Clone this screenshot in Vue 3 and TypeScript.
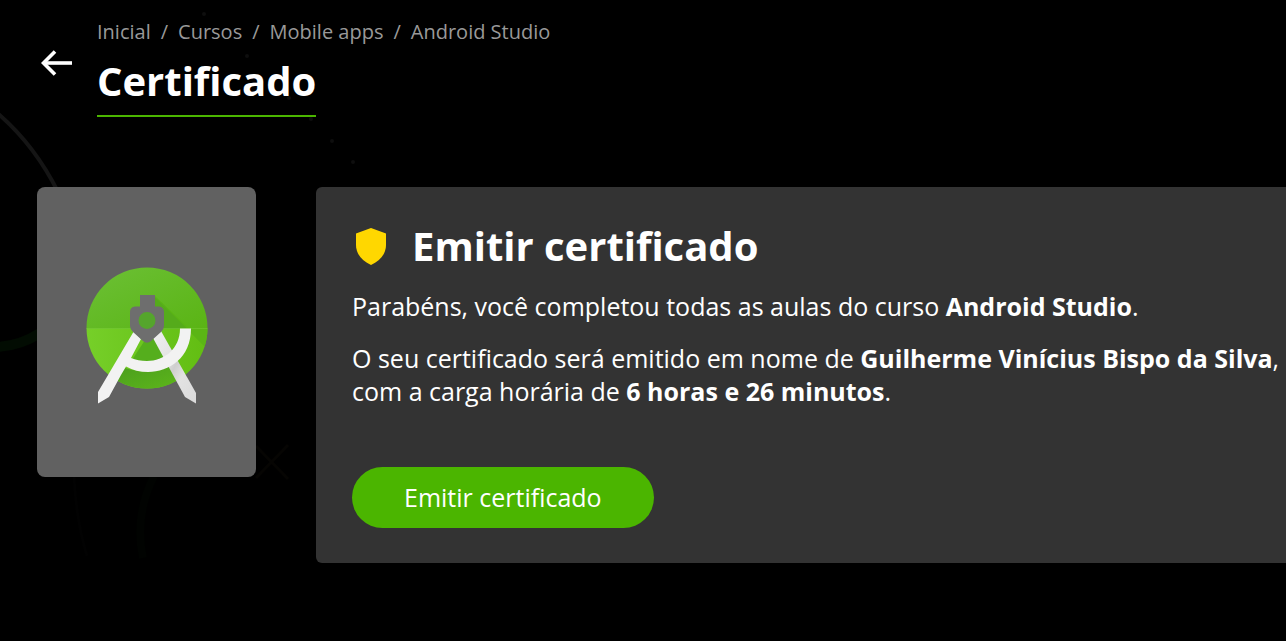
<script setup lang="ts">
interface Crumb {
  label: string
  href: string
}

const crumbs: Crumb[] = [
  { label: 'Inicial', href: '#inicial' },
  { label: 'Cursos', href: '#cursos' },
  { label: 'Mobile apps', href: '#mobile-apps' },
  { label: 'Android Studio', href: '#android-studio' },
]
const course = 'Android Studio'
const student = 'Guilherme Vinícius Bispo da Silva'
const workload = '6 horas e 26 minutos'
</script>

<template>
  <div class="page">
    <svg class="backdrop" width="380" height="580" viewBox="0 0 380 580" fill="none" aria-hidden="true">
      <path d="M-4 112Q34 144 58 192" stroke="#151515" stroke-width="4" />
      <path d="M-4 347Q20 346 40 333" stroke="#020c02" stroke-width="10" />
      <path d="M74 476Q76 520 87 556" stroke="#020202" stroke-width="3" />
      <path d="M154 476Q134 516 143 558" stroke="#010301" stroke-width="8" />
      <path d="M256 446L288 479M288 445L256 478" stroke="#060503" stroke-width="3" />
      <g fill="#0e0e0e">
        <circle cx="204" cy="14" r="2" />
        <circle cx="247" cy="56" r="2" />
        <circle cx="289" cy="98" r="2" />
        <circle cx="311" cy="119" r="2" />
        <circle cx="332" cy="141" r="2" />
        <circle cx="353" cy="162" r="2" />
      </g>
    </svg>

    <header class="header">
      <a class="back" href="#android-studio" aria-label="Voltar">
        <svg width="32" height="28" viewBox="0 0 32 28" fill="none" stroke="#fff">
          <path d="M2.500 14H31" stroke-width="3.600" />
          <path d="M14 2.500L2.500 14L14 25.500" stroke-width="3.600" />
        </svg>
      </a>
      <div class="heading">
        <nav aria-label="Navegação">
          <ol class="crumbs">
            <li v-for="crumb in crumbs" :key="crumb.label">
              <a :href="crumb.href">{{ crumb.label }}</a>
            </li>
          </ol>
        </nav>
        <h1>Certificado</h1>
      </div>
    </header>

    <main class="content">
      <div class="cover">
        <svg width="122" height="138" viewBox="0 0 122 138" role="img" aria-label="Android Studio">
          <defs>
            <linearGradient id="top" x1="0" y1="0" x2="1" y2="1">
              <stop offset="0" stop-color="#6cc036" />
              <stop offset="1" stop-color="#5ab414" />
            </linearGradient>
            <linearGradient id="bottom" x1="0" y1="0" x2="1" y2="0">
              <stop offset="0" stop-color="#76cf29" />
              <stop offset="1" stop-color="#62bd12" />
            </linearGradient>
            <linearGradient id="shade" x1="0" y1="0" x2="1" y2="1">
              <stop offset="0" stop-color="#4a9c1e" />
              <stop offset="1" stop-color="#5fb91a" />
            </linearGradient>
            <linearGradient id="leg" x1="0" y1="0" x2="1" y2="1">
              <stop offset="0" stop-color="#f0f0f0" />
              <stop offset=".35" stop-color="#e4e4e4" />
              <stop offset=".5" stop-color="#cfcfcf" />
              <stop offset=".65" stop-color="#e2e2e2" />
              <stop offset="1" stop-color="#dadada" />
            </linearGradient>
            <clipPath id="disc"><circle cx="61" cy="61" r="60.500" /></clipPath>
          </defs>
          <g clip-path="url(#disc)">
            <rect width="122" height="62" fill="url(#top)" />
            <rect y="61.500" width="122" height="62" fill="url(#bottom)" />
            <path d="M68 29L122 83V61.500L103 61.500L69 29Z" fill="#5bb515" />
            <path d="M68 29L101 61.500H70Z" fill="#55ab1b" />
            <path d="M61 70L46 93Q70 102 88 86L72 62Z" fill="#55ae1d" />
            <path d="M39 101Q65 109 84 98L97 118Q65 132 27 117Z" fill="url(#shade)" />
            <path d="M0 61.500H122" stroke="#7dcc42" stroke-width=".7" opacity=".6" />
            <circle cx="61" cy="53.500" r="10" fill="#55a52c" />
          </g>
          <path d="M67 71L75 64L110 126V136.500L99 130Z" fill="url(#leg)" />
          <path d="M94 61.500H105C105 91 83 105 62 105Q50 105 40 99.500L35 108L23 130L12 136.500V125L48 64L55 72L45 91Q52 94 61 94C78 94 94 82 94 61.500Z" fill="#f2f2f2" />
          <path fill="#6e6e6e" fill-rule="evenodd" d="M54 28H69V39.500H73Q78 40 78 45V59Q78 62 75 65L65 74Q61 77.500 57 74L47 65Q44 62 44 59V45Q44 40 49 39.500H54ZM61 45A8.500 8.500 0 1 0 61 62A8.500 8.500 0 1 0 61 45Z" />
        </svg>
      </div>

      <section class="panel" aria-labelledby="panel-title">
        <div class="panel-heading">
          <svg width="38" height="38" viewBox="0 0 38 38" aria-hidden="true">
            <path d="M19 1L34 6.500V18C34 27 28 34 19 38C10 34 4 27 4 18V6.500Z" fill="gold" />
          </svg>
          <h2 id="panel-title">Emitir certificado</h2>
        </div>
        <p>Parabéns, você completou todas as aulas do curso <strong>{{ course }}</strong>.</p>
        <p>
          O seu certificado será emitido em nome de <strong>{{ student }}</strong>,
          com a carga horária de <strong>{{ workload }}</strong>.
        </p>
        <button type="button">Emitir certificado</button>
      </section>
    </main>
  </div>
</template>

<style>
body {
  margin: 0;
  background: #000;
}
</style>

<style scoped>
.page {
  position: relative;
  box-sizing: border-box;
  min-height: 100vh;
  padding: 18px 0 40px;
  overflow: hidden;
  color: #fff;
  background: #000;
  font-family: "Open Sans", sans-serif;
}

.backdrop {
  position: absolute;
  top: 0;
  left: 0;
}

.header {
  position: relative;
  display: flex;
  align-items: center;
  gap: 24px;
  padding-left: 41px;
}

.back {
  display: flex;
  padding-bottom: 10px;
}

.crumbs {
  display: flex;
  margin: 0;
  padding: 0;
  list-style: none;
  font-size: 20px;
  line-height: 28px;
}

.crumbs li + li::before {
  content: "/";
  padding: 0 10px;
  color: #999;
}

.crumbs a {
  color: #999;
  text-decoration: none;
}

h1,
h2 {
  margin: 0;
  font-size: 40px;
  font-weight: 700;
}

h1 {
  width: fit-content;
  padding-bottom: 6px;
  border-bottom: 2px solid #4bb500;
  line-height: 56px;
  margin-top: 7px;
}

.content {
  position: relative;
  display: flex;
  align-items: flex-start;
  gap: 60px;
  margin-top: 70px;
  padding-left: 37px;
}

.cover {
  display: flex;
  flex: none;
  align-items: center;
  justify-content: center;
  box-sizing: border-box;
  width: 219px;
  height: 290px;
  padding-top: 7px;
  border-radius: 8px;
  background: #616161;
}

.panel {
  flex: 1;
  min-width: 0;
  padding: 32px 0 35px 36px;
  border-radius: 6px 0 0 6px;
  background: #333;
}

.panel-heading {
  display: flex;
  align-items: center;
  gap: 22px;
  margin-bottom: 17px;
}

h2 {
  line-height: 54px;
}

p {
  margin: 0 0 19px;
  font-size: 25px;
  line-height: 33px;
}

button {
  display: block;
  margin-top: 59px;
  padding: 14px 52px;
  border: 0;
  border-radius: 31px;
  color: #fff;
  background: #4bb500;
  font: inherit;
  font-size: 25px;
  line-height: 33px;
  cursor: pointer;
}
</style>
